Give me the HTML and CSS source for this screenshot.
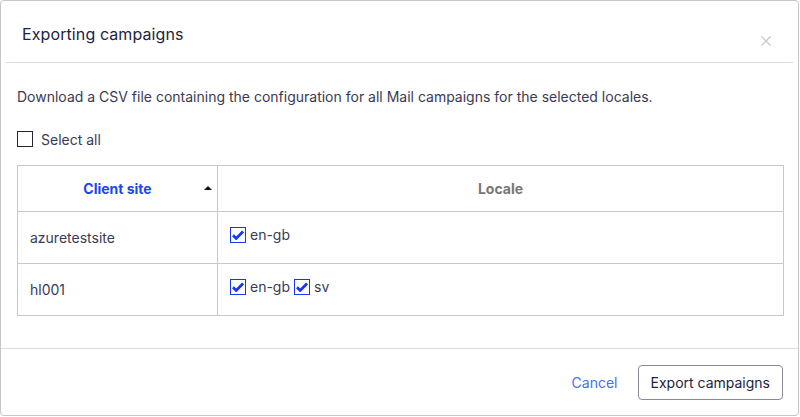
FILE: index.html
```html
<!DOCTYPE html>
<html lang="en">
<head>
<meta charset="utf-8">
<title>Exporting campaigns</title>
<link rel="stylesheet" href="styles.css">
</head>
<body>
<div class="modal">
  <div class="modal-header">
    <h1 class="modal-title">Exporting campaigns</h1>
    <button class="close" aria-label="Close">
      <svg width="10" height="10" viewBox="0 0 10 10"><path d="M0.5 0.5 L9.5 9.5 M9.5 0.5 L0.5 9.5" stroke="#c4c4c8" stroke-width="1.2" fill="none"/></svg>
    </button>
  </div>
  <div class="modal-body">
    <p class="desc">Download a CSV file containing the configuration for all Mail campaigns for the selected locales.</p>
    <label class="select-all">
      <span class="box"></span>
      <span>Select all</span>
    </label>
    <table class="grid">
      <thead>
        <tr>
          <th class="col-site"><span class="sorted">Client site</span><span class="sort-arrow"></span></th>
          <th class="col-locale">Locale</th>
        </tr>
      </thead>
      <tbody>
        <tr>
          <td class="site">azuretestsite</td>
          <td class="locales">
            <div class="locale-list">
              <span class="locale"><span class="box checked"><svg width="12" height="10" viewBox="0 0 12 10"><path d="M1 5.2 L4.2 8.4 L11 1.4" stroke="#1538f5" stroke-width="2.8" fill="none"/></svg></span>en-gb</span>
            </div>
          </td>
        </tr>
        <tr>
          <td class="site">hl001</td>
          <td class="locales">
            <div class="locale-list">
              <span class="locale"><span class="box checked"><svg width="12" height="10" viewBox="0 0 12 10"><path d="M1 5.2 L4.2 8.4 L11 1.4" stroke="#1538f5" stroke-width="2.8" fill="none"/></svg></span>en-gb</span>
              <span class="locale"><span class="box checked"><svg width="12" height="10" viewBox="0 0 12 10"><path d="M1 5.2 L4.2 8.4 L11 1.4" stroke="#1538f5" stroke-width="2.8" fill="none"/></svg></span>sv</span>
            </div>
          </td>
        </tr>
      </tbody>
    </table>
  </div>
  <div class="modal-footer">
    <button class="link-btn">Cancel</button>
    <button class="btn">Export campaigns</button>
  </div>
</div>
</body>
</html>
```
FILE: styles.css
```css
* { box-sizing: border-box; }
html, body { margin: 0; padding: 0; background: #ffffff; }
body {
  font-family: Inter, "Noto Sans", "Liberation Sans", sans-serif;
  font-size: 14px;
  color: #3a3a55;
}
.modal {
  width: 799px;
  height: 416px;
  border: 1px solid #c6c6ca;
  border-radius: 4px;
  background: #fff;
  display: flex;
  flex-direction: column;
}
.modal-header {
  margin: 0 5px;
  height: 62px;
  padding: 21px 16px 0 16px;
  border-bottom: 1px solid #dcdce4;
  display: flex;
  justify-content: space-between;
  align-items: flex-start;
}
.modal-title {
  margin: 0;
  font-size: 16px;
  line-height: 24px;
  font-weight: 400;
  color: #23233d;
  letter-spacing: 0.1px;
}
.close {
  border: 0;
  background: none;
  padding: 0;
  margin: 14px 6px 0 0;
  width: 10px;
  height: 10px;
  display: block;
}
.close svg { display: block; }
.modal-body {
  flex: 1;
  padding: 24px 15px 0 16px;
}
.desc {
  margin: 0;
  line-height: 20px;
  color: #3a3a55;
}
.select-all {
  display: flex;
  align-items: center;
  gap: 8px;
  margin-top: 24px;
  height: 16px;
  color: #3a3a55;
}
.box {
  width: 16px;
  height: 16px;
  border: 1.5px solid #25253a;
  background: #fff;
  display: inline-flex;
  align-items: center;
  justify-content: center;
  flex: none;
}
.box.checked { border-color: #1538f5; }
.box svg { display: block; }
.grid {
  margin-top: 18px;
  width: 767px;
  border-collapse: collapse;
  table-layout: fixed;
}
.grid th, .grid td {
  border: 1px solid #c8c8c8;
  padding: 0 12px;
}
.grid th {
  height: 46px;
  font-weight: 700;
  text-align: center;
  color: #777;
}
.col-site { width: 200px; position: relative; }
.sorted { color: #1a46f0; }
.sort-arrow {
  position: absolute;
  right: 5px;
  top: 20px;
  width: 0;
  height: 0;
  border-left: 4px solid transparent;
  border-right: 4px solid transparent;
  border-bottom: 4px solid #111;
}
.grid td { height: 52px; }
.site { vertical-align: middle; color: #3a3a55; }
.locales { vertical-align: top; }
.locale-list { display: flex; gap: 4px; padding-top: 15px; }
.locale {
  display: inline-flex;
  align-items: center;
  gap: 4px;
  line-height: 16px;
  color: #3a3a55;
}
.modal-footer {
  border-top: 1px solid #dcdce4;
  height: 67px;
  display: flex;
  justify-content: flex-end;
  align-items: center;
  gap: 20px;
  padding: 0 15px 0 16px;
}
.link-btn {
  border: 0;
  background: none;
  padding: 0;
  font: inherit;
  color: #4a6cf7;
}
.btn {
  font: inherit;
  color: #23233d;
  background: #fff;
  border: 1px solid #8a8a94;
  border-radius: 4px;
  height: 35px;
  padding: 0 12px;
}
```
